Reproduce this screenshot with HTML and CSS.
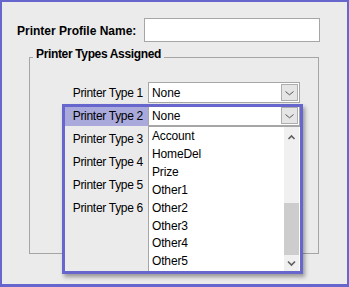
FILE: index.html
```html
<!DOCTYPE html>
<html>
<head>
<meta charset="utf-8">
<title>Printer Profile</title>
<link rel="stylesheet" href="styles.css">
</head>
<body>
<div class="window">
  <div class="name-row">
    <span class="name-label">Printer Profile Name:</span>
    <div class="text-input"></div>
  </div>
  <fieldset class="group">
    <legend class="group-title">Printer Types Assigned</legend>
    <div class="rows">
      <div class="row">
        <span class="type-label">Printer Type 1</span>
        <div class="combo"><span class="combo-value">None</span><span class="combo-btn"><svg width="15" height="15" viewBox="0 0 15 15"><polyline points="3.5,6.5 7.5,9.8 11.5,6.5" fill="none" stroke="#555" stroke-width="1"/></svg></span></div>
      </div>
      <div class="row">
        <span class="type-label">Printer Type 2</span>
        <div class="combo combo-active"><span class="combo-value">None</span><span class="combo-btn"><svg width="15" height="15" viewBox="0 0 15 15"><polyline points="3.5,6.5 7.5,9.8 11.5,6.5" fill="none" stroke="#555" stroke-width="1"/></svg></span></div>
      </div>
      <div class="row">
        <span class="type-label">Printer Type 3</span>
        <div class="combo"><span class="combo-value"></span><span class="combo-btn"></span></div>
      </div>
      <div class="row">
        <span class="type-label">Printer Type 4</span>
        <div class="combo"><span class="combo-value"></span><span class="combo-btn"></span></div>
      </div>
      <div class="row">
        <span class="type-label">Printer Type 5</span>
        <div class="combo"><span class="combo-value"></span><span class="combo-btn"></span></div>
      </div>
      <div class="row">
        <span class="type-label">Printer Type 6</span>
        <div class="combo"><span class="combo-value"></span><span class="combo-btn"></span></div>
      </div>
      <div class="popup">
        <div class="popup-highlight"></div>
        <div class="list">
          <ul class="list-items">
            <li>Account</li>
            <li>HomeDel</li>
            <li>Prize</li>
            <li>Other1</li>
            <li>Other2</li>
            <li>Other3</li>
            <li>Other4</li>
            <li>Other5</li>
          </ul>
          <div class="scrollbar">
            <div class="sb-up"><svg width="15" height="17" viewBox="0 0 15 17"><polyline points="4.5,12 7.5,9 10.5,12" fill="none" stroke="#606060" stroke-width="1.6"/></svg></div>
            <div class="sb-track"><div class="sb-thumb"></div></div>
            <div class="sb-down"><svg width="15" height="16" viewBox="0 0 15 16"><polyline points="4,6.5 7.5,10 11,6.5" fill="none" stroke="#606060" stroke-width="1.6"/></svg></div>
          </div>
        </div>
      </div>
      <div class="focus-ring"></div>
    </div>
  </fieldset>
</div>
</body>
</html>
```

FILE: styles.css
```css
* {
  box-sizing: border-box;
}

html,
body {
  margin: 0;
  padding: 0;
}

body {
  font-family: "Liberation Sans", Arial, sans-serif;
  font-size: 12px;
  color: #000;
  background: #ebebeb;
}

.window {
  width: 349px;
  height: 287px;
  border-style: solid;
  border-color: #6666cc;
  border-width: 2px 2px 3px 2px;
  background: #ebebeb;
  padding: 16px 0 0 15px;
  overflow: hidden;
  display: flex;
  flex-direction: column;
}

.name-row {
  display: flex;
  align-items: center;
  height: 24px;
}

.name-label {
  width: 127px;
  font-weight: bold;
  line-height: 14px;
  padding-top: 2px;
}

.text-input {
  width: 176px;
  height: 24px;
  background: #fff;
  border: 1px solid #a6a6a6;
}

.group {
  margin: 5px 0 0 12px;
  width: 290px;
  border: 1px solid #a5a5a5;
  padding: 0 17px 34px 0;
  min-width: 0;
}

.group-title {
  margin-left: 3px;
  padding: 0 3px 6px 3px;
  font-weight: bold;
  letter-spacing: -0.35px;
  line-height: 14px;
}

.rows {
  position: relative;
  display: flex;
  flex-direction: column;
  gap: 2.2px;
  margin-top: 15px;
}

.row {
  display: flex;
  align-items: center;
  gap: 5px;
  height: 21px;
}

.type-label {
  position: relative;
  z-index: 1;
  width: 113px;
  text-align: right;
  letter-spacing: -0.3px;
  white-space: nowrap;
}

.combo {
  width: 152px;
  height: 21px;
  background: #fff;
  border: 1px solid #a6a6a6;
  display: flex;
  align-items: center;
  justify-content: space-between;
  padding: 0 1px 0 3px;
}

.combo-active {
  position: relative;
  z-index: 1;
}

.combo-value {
  letter-spacing: -0.1px;
}

.combo-btn {
  width: 17px;
  height: 17px;
  background: #e5e5e5;
  border: 1px solid #adadad;
  display: flex;
}

.popup {
  position: absolute;
  left: 35px;
  top: 25px;
  width: 235px;
  height: 164px;
  background: #ebebeb;
  display: grid;
  grid-template-columns: 83px 152px;
  grid-template-rows: 19px 1fr;
}

.popup-highlight {
  grid-row: 1;
  grid-column: 1;
  background: #a9a9dc;
}

.list {
  grid-row: 2;
  grid-column: 2;
  background: #fff;
  border-top: 1px solid #a6a6a6;
  border-left: 1px solid #a6a6a6;
  padding-right: 1px;
  display: flex;
  overflow: hidden;
}

.list-items {
  flex: 1;
  margin: 0;
  padding: 1.3px 0 0 3px;
  list-style: none;
}

.list-items li {
  line-height: 17.86px;
  height: 17.86px;
  white-space: nowrap;
  letter-spacing: -0.15px;
}

.scrollbar {
  width: 15px;
  background: #f0f0f0;
  display: flex;
  flex-direction: column;
}

.sb-up {
  height: 17px;
  display: flex;
}

.sb-track {
  flex: 1;
}

.sb-thumb {
  margin-top: 59px;
  height: 52px;
  background: #cdcdcd;
}

.sb-down {
  height: 16px;
  display: flex;
}

.focus-ring {
  position: absolute;
  left: 32px;
  top: 22px;
  width: 241px;
  height: 170px;
  border: 3px solid #6666cc;
  box-shadow: 2px 3px 4px rgba(0, 0, 0, 0.35);
  z-index: 2;
  pointer-events: none;
}
```
